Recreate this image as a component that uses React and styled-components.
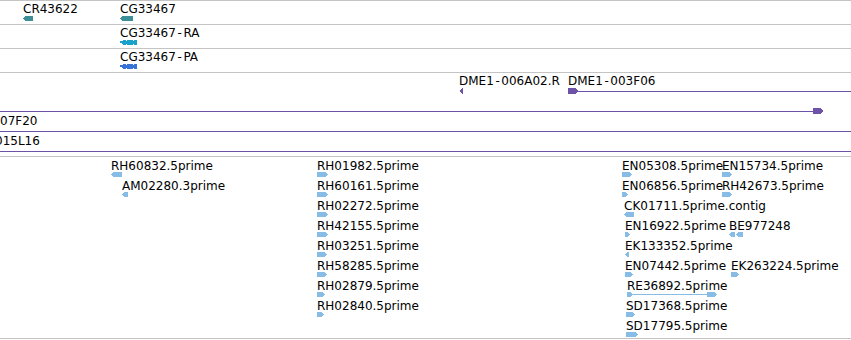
import React from "react";
import styled, { createGlobalStyle } from "styled-components";

const GlobalStyle = createGlobalStyle`
  body {
    margin: 0;
    background: #fff;
  }
`;

const ROW = 20;

const tracks = [
  {
    height: 23,
    top: 2,
    gap: 1,
    glyphH: 5,
    color: "#3c8f96",
    features: [
      { label: "CR43622", x: 23, row: 0, kind: "left", w: 10 },
      { label: "CG33467", x: 120, row: 0, kind: "left", w: 13 },
    ],
  },
  {
    height: 23,
    top: 2,
    gap: 1,
    glyphH: 5,
    color: "#18a2cb",
    features: [{ label: "CG33467-RA", x: 120, row: 0, kind: "chevrons", w: 17 }],
  },
  {
    height: 23,
    top: 2,
    gap: 1,
    glyphH: 5,
    color: "#3772d6",
    features: [{ label: "CG33467-PA", x: 120, row: 0, kind: "chevrons", w: 17 }],
  },
  {
    height: 83,
    top: 2,
    gap: 1,
    glyphH: 6,
    color: "#6d53a8",
    features: [
      { label: "DME1-006A02.R", x: 459, row: 0, kind: "left", w: 4 },
      { label: "DME1-003F06", x: 568, row: 0, kind: "headLine", w: 300 },
      { label: "", x: 0, row: 1, kind: "lineHead", w: 823 },
      { label: "07F20", x: 0, row: 2, kind: "line", w: 860 },
      { label: "015L16", x: -5, row: 3, kind: "line", w: 870 },
    ],
  },
  {
    height: 181,
    top: 3,
    gap: 0,
    glyphH: 5,
    color: "#86bce6",
    features: [
      { label: "RH60832.5prime", x: 111, row: 0, kind: "left", w: 11 },
      { label: "AM02280.3prime", x: 122, row: 1, kind: "left", w: 6 },
      { label: "RH01982.5prime", x: 317, row: 0, kind: "right", w: 11 },
      { label: "RH60161.5prime", x: 317, row: 1, kind: "right", w: 11 },
      { label: "RH02272.5prime", x: 317, row: 2, kind: "right", w: 11 },
      { label: "RH42155.5prime", x: 317, row: 3, kind: "right", w: 11 },
      { label: "RH03251.5prime", x: 317, row: 4, kind: "right", w: 10 },
      { label: "RH58285.5prime", x: 317, row: 5, kind: "right", w: 10 },
      { label: "RH02879.5prime", x: 317, row: 6, kind: "right", w: 8 },
      { label: "RH02840.5prime", x: 317, row: 7, kind: "right", w: 7 },
      { label: "EN05308.5prime", x: 622, row: 0, kind: "right", w: 10 },
      { label: "EN06856.5prime", x: 622, row: 1, kind: "right", w: 6 },
      { label: "CK01711.5prime.contig", x: 624, row: 2, kind: "left", w: 10 },
      { label: "EN16922.5prime", x: 625, row: 3, kind: "right", w: 5 },
      { label: "EK133352.5prime", x: 625, row: 4, kind: "left", w: 4 },
      { label: "EN07442.5prime", x: 625, row: 5, kind: "right", w: 8 },
      { label: "RE36892.5prime", x: 627, row: 6, kind: "span", w: 90 },
      { label: "SD17368.5prime", x: 626, row: 7, kind: "right", w: 9 },
      { label: "SD17795.5prime", x: 626, row: 8, kind: "right", w: 12 },
      { label: "EN15734.5prime", x: 722, row: 0, kind: "right", w: 10 },
      { label: "RH42673.5prime", x: 722, row: 1, kind: "right", w: 10 },
      { label: "BE977248", x: 729, row: 3, kind: "doubleLeft", w: 14 },
      { label: "EK263224.5prime", x: 731, row: 5, kind: "right", w: 8 },
    ],
  },
];

const leftArrow = (x, w, h) => {
  const a = Math.min(3, w);
  return `${x},${h / 2} ${x + a},0 ${x + w},0 ${x + w},${h} ${x + a},${h}`;
};

const rightArrow = (x, w, h) => {
  const a = Math.min(3, w);
  return `${x},0 ${x + w - a},0 ${x + w},${h / 2} ${x + w - a},${h} ${x},${h}`;
};

const Browser = styled.div`
  width: 851px;
  overflow: hidden;
  border-top: 1px solid #c4c4c4;
  font-family: "DejaVu Sans", sans-serif;
`;

const Track = styled.div`
  position: relative;
  height: ${(p) => p.$height}px;
  border-bottom: 1px solid #c4c4c4;
  overflow: hidden;
`;

const Feature = styled.div.attrs((p) => ({
  style: { left: p.$x, top: p.$y },
}))`
  position: absolute;
  white-space: nowrap;
`;

const Label = styled.div`
  height: 12px;
  font-size: 12px;
  line-height: 12px;
  color: #000;
`;

// the browser's font draws a wider dash than DejaVu does
const Dash = styled.span`
  padding: 0 1.6px;
`;

const GlyphSvg = styled.svg`
  display: block;
  margin-top: ${(p) => p.$gap}px;
  overflow: visible;
`;

const renderLabel = (text) =>
  text.split(/(-)/).map((part, i) => (part === "-" ? <Dash key={i}>-</Dash> : part));

const Glyph = ({ kind, w, h, color, gap }) => {
  const mid = Math.floor(h / 2);
  let shapes;

  switch (kind) {
    case "left":
      shapes = <polygon points={leftArrow(0, w, h)} />;
      break;
    case "right":
      shapes = <polygon points={rightArrow(0, w, h)} />;
      break;
    case "chevrons":
      shapes = (
        <>
          <rect x={0} y={mid - 1} width={w} height={2} />
          {[0, 1, 2, 3].map((i) => (
            <polygon key={i} points={leftArrow(i * 3.5 + 1, 5, h)} />
          ))}
        </>
      );
      break;
    case "doubleLeft":
      shapes = (
        <>
          <polygon points={leftArrow(0, 6, h)} />
          <polygon points={leftArrow(7, 7, h)} />
        </>
      );
      break;
    case "line":
      shapes = <rect x={0} y={mid} width={w} height={1} />;
      break;
    case "lineHead":
      shapes = (
        <>
          <rect x={0} y={mid} width={w - 10} height={1} />
          <polygon points={rightArrow(w - 10, 10, h)} />
        </>
      );
      break;
    case "headLine":
      shapes = (
        <>
          <polygon points={rightArrow(0, 10, h)} />
          <rect x={10} y={mid} width={w - 10} height={1} />
        </>
      );
      break;
    case "span":
      shapes = (
        <>
          <polygon points={rightArrow(0, 6, h)} />
          <rect x={6} y={mid} width={w - 14} height={1} />
          <polygon points={rightArrow(w - 10, 10, h)} />
        </>
      );
      break;
    default:
      shapes = null;
  }

  return (
    <GlyphSvg width={w} height={h} $gap={gap} fill={color} shapeRendering="crispEdges">
      {shapes}
    </GlyphSvg>
  );
};

const App = () => {
  return (
    <>
      <GlobalStyle />
      <Browser>
        {tracks.map((t, i) => (
          <Track key={i} $height={t.height}>
            {t.features.map((f, j) => (
              <Feature key={j} $x={f.x} $y={t.top + f.row * ROW}>
                <Label>{renderLabel(f.label)}</Label>
                <Glyph kind={f.kind} w={f.w} h={t.glyphH} color={t.color} gap={t.gap} />
              </Feature>
            ))}
          </Track>
        ))}
      </Browser>
    </>
  );
};

export default App;
